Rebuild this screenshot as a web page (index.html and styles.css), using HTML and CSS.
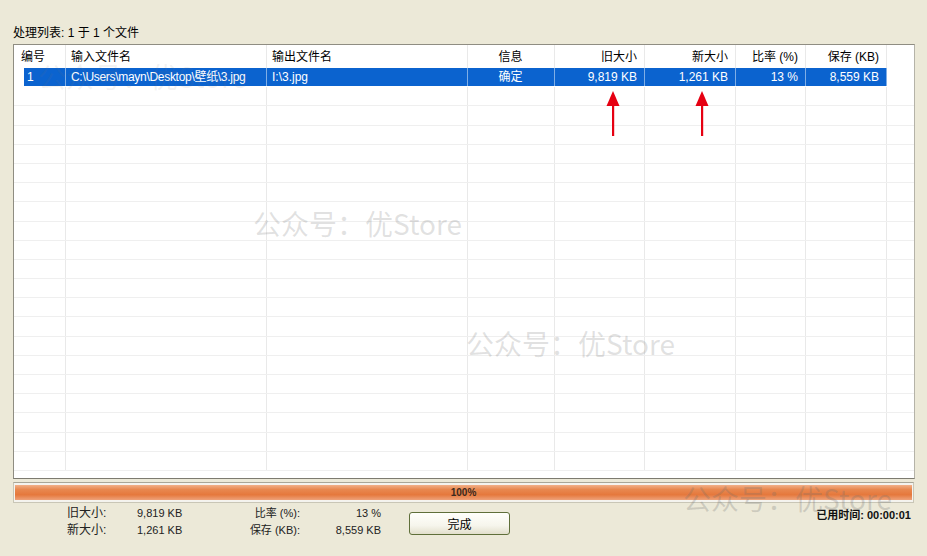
FILE: index.html
```html
<!DOCTYPE html>
<html lang="zh">
<head>
<meta charset="utf-8">
<link rel="stylesheet" href="styles.css">
</head>
<body>
<div class="app">
  <div class="title">处理列表: 1 于 1 个文件</div>
  <div class="list">
    <div class="row head">
      <div class="c c1">编号</div>
      <div class="c c2">输入文件名</div>
      <div class="c c3">输出文件名</div>
      <div class="c c4 center">信息</div>
      <div class="c c5 right">旧大小</div>
      <div class="c c6 right">新大小</div>
      <div class="c c7 right">比率 (%)</div>
      <div class="c c8 right">保存 (KB)</div>
      <div class="c c9"></div>
    </div>
    <div class="row sel">
      <div class="c c1"><span class="pad"></span><span class="selcell">1</span></div>
      <div class="c c2">C:\Users\mayn\Desktop\壁纸\3.jpg</div>
      <div class="c c3">I:\3.jpg</div>
      <div class="c c4 center">确定</div>
      <div class="c c5 right">9,819 KB</div>
      <div class="c c6 right">1,261 KB</div>
      <div class="c c7 right">13 %</div>
      <div class="c c8 right">8,559 KB</div>
      <div class="c c9 nosel"></div>
    </div>
    <div class="row"><div class="c c1"></div><div class="c c2"></div><div class="c c3"></div><div class="c c4"></div><div class="c c5"></div><div class="c c6"></div><div class="c c7"></div><div class="c c8"></div><div class="c c9"></div></div>
    <div class="row"><div class="c c1"></div><div class="c c2"></div><div class="c c3"></div><div class="c c4"></div><div class="c c5"></div><div class="c c6"></div><div class="c c7"></div><div class="c c8"></div><div class="c c9"></div></div>
    <div class="row"><div class="c c1"></div><div class="c c2"></div><div class="c c3"></div><div class="c c4"></div><div class="c c5"></div><div class="c c6"></div><div class="c c7"></div><div class="c c8"></div><div class="c c9"></div></div>
    <div class="row"><div class="c c1"></div><div class="c c2"></div><div class="c c3"></div><div class="c c4"></div><div class="c c5"></div><div class="c c6"></div><div class="c c7"></div><div class="c c8"></div><div class="c c9"></div></div>
    <div class="row"><div class="c c1"></div><div class="c c2"></div><div class="c c3"></div><div class="c c4"></div><div class="c c5"></div><div class="c c6"></div><div class="c c7"></div><div class="c c8"></div><div class="c c9"></div></div>
    <div class="row"><div class="c c1"></div><div class="c c2"></div><div class="c c3"></div><div class="c c4"></div><div class="c c5"></div><div class="c c6"></div><div class="c c7"></div><div class="c c8"></div><div class="c c9"></div></div>
    <div class="row"><div class="c c1"></div><div class="c c2"></div><div class="c c3"></div><div class="c c4"></div><div class="c c5"></div><div class="c c6"></div><div class="c c7"></div><div class="c c8"></div><div class="c c9"></div></div>
    <div class="row"><div class="c c1"></div><div class="c c2"></div><div class="c c3"></div><div class="c c4"></div><div class="c c5"></div><div class="c c6"></div><div class="c c7"></div><div class="c c8"></div><div class="c c9"></div></div>
    <div class="row"><div class="c c1"></div><div class="c c2"></div><div class="c c3"></div><div class="c c4"></div><div class="c c5"></div><div class="c c6"></div><div class="c c7"></div><div class="c c8"></div><div class="c c9"></div></div>
    <div class="row"><div class="c c1"></div><div class="c c2"></div><div class="c c3"></div><div class="c c4"></div><div class="c c5"></div><div class="c c6"></div><div class="c c7"></div><div class="c c8"></div><div class="c c9"></div></div>
    <div class="row"><div class="c c1"></div><div class="c c2"></div><div class="c c3"></div><div class="c c4"></div><div class="c c5"></div><div class="c c6"></div><div class="c c7"></div><div class="c c8"></div><div class="c c9"></div></div>
    <div class="row"><div class="c c1"></div><div class="c c2"></div><div class="c c3"></div><div class="c c4"></div><div class="c c5"></div><div class="c c6"></div><div class="c c7"></div><div class="c c8"></div><div class="c c9"></div></div>
    <div class="row"><div class="c c1"></div><div class="c c2"></div><div class="c c3"></div><div class="c c4"></div><div class="c c5"></div><div class="c c6"></div><div class="c c7"></div><div class="c c8"></div><div class="c c9"></div></div>
    <div class="row"><div class="c c1"></div><div class="c c2"></div><div class="c c3"></div><div class="c c4"></div><div class="c c5"></div><div class="c c6"></div><div class="c c7"></div><div class="c c8"></div><div class="c c9"></div></div>
    <div class="row"><div class="c c1"></div><div class="c c2"></div><div class="c c3"></div><div class="c c4"></div><div class="c c5"></div><div class="c c6"></div><div class="c c7"></div><div class="c c8"></div><div class="c c9"></div></div>
    <div class="row"><div class="c c1"></div><div class="c c2"></div><div class="c c3"></div><div class="c c4"></div><div class="c c5"></div><div class="c c6"></div><div class="c c7"></div><div class="c c8"></div><div class="c c9"></div></div>
    <div class="row"><div class="c c1"></div><div class="c c2"></div><div class="c c3"></div><div class="c c4"></div><div class="c c5"></div><div class="c c6"></div><div class="c c7"></div><div class="c c8"></div><div class="c c9"></div></div>
    <div class="row"><div class="c c1"></div><div class="c c2"></div><div class="c c3"></div><div class="c c4"></div><div class="c c5"></div><div class="c c6"></div><div class="c c7"></div><div class="c c8"></div><div class="c c9"></div></div>
    <div class="row"><div class="c c1"></div><div class="c c2"></div><div class="c c3"></div><div class="c c4"></div><div class="c c5"></div><div class="c c6"></div><div class="c c7"></div><div class="c c8"></div><div class="c c9"></div></div>
    <div class="row"><div class="c c1"></div><div class="c c2"></div><div class="c c3"></div><div class="c c4"></div><div class="c c5"></div><div class="c c6"></div><div class="c c7"></div><div class="c c8"></div><div class="c c9"></div></div>
  </div>
  <div class="progress"><div class="fill">100%</div></div>
  <div class="footer">
    <div class="stats">
      <div class="lbl">旧大小:</div><div class="val">9,819 KB</div><div class="lbl2">比率 (%):</div><div class="val2">13 %</div>
      <div class="lbl">新大小:</div><div class="val">1,261 KB</div><div class="lbl2">保存 (KB):</div><div class="val2">8,559 KB</div>
    </div>
    <button class="btn">完成</button>
    <div class="time">已用时间: 00:00:01</div>
  </div>

  <svg class="arrow a1" width="16" height="46" viewBox="0 0 16 46"><polygon points="8,0 14.5,15 1.5,15" fill="#e60012"/><rect x="7" y="14" width="2.2" height="31" fill="#e60012"/></svg>
  <svg class="arrow a2" width="16" height="46" viewBox="0 0 16 46"><polygon points="8,0 14.5,15 1.5,15" fill="#e60012"/><rect x="7" y="14" width="2.2" height="31" fill="#e60012"/></svg>

  <div class="wm w0">公众号：优Store</div>
  <div class="wm w1">公众号：优Store</div>
  <div class="wm w2">公众号：优Store</div>
  <div class="wm w3">公众号：优Store</div>
</div>
</body>
</html>
```
FILE: styles.css
```css
html, body {
  margin: 0;
  padding: 0;
}
body {
  background: #ece9d8;
  font-family: "Liberation Sans", "Noto Sans CJK SC", sans-serif;
  font-size: 12px;
  color: #000;
  width: 927px;
  height: 556px;
  overflow: hidden;
}
.app {
  position: relative;
  width: 927px;
  height: 556px;
}
.title {
  padding: 26px 0 0 13px;
  line-height: 14px;
  height: 14px;
}
.list {
  margin: 4px 0 0 13px;
  width: 902px;
  height: 435px;
  box-sizing: border-box;
  border: 1px solid #8f8d82;
  border-right-color: #b5b3a8;
  border-bottom-color: #7d7b70;
  background: #fff;
  overflow: hidden;
}
.row {
  display: flex;
  height: 19.2px;
  box-sizing: border-box;
  border-bottom: 1px solid #efefef;
}
.row.head {
  height: 23px;
  border-bottom: none;
  line-height: 25px;
}
.c {
  box-sizing: border-box;
  border-right: 1px solid #e9e9e9;
  padding: 0 7px 0 6px;
  white-space: nowrap;
  overflow: hidden;
  flex: none;
}
.c1 { width: 52px; }
.c2 { width: 201px; padding-left: 5px; }
.c3 { width: 201px; padding-left: 5px; }
.c4 { width: 87px; }
.c5 { width: 90px; }
.c6 { width: 91px; }
.c7 { width: 70px; }
.c8 { width: 81px; }
.c9 { width: 27px; border-right: none; }
.center { text-align: center; }
.right { text-align: right; }
.row.head .c1 { padding-left: 7px; }

.row.sel {
  line-height: 19px;
  color: #fff;
  border-bottom-color: #fff;
}
.row.sel .c2 { letter-spacing: -0.3px; }
.row.sel .c {
  background: #0b63cf;
  border-right-color: #7faee6;
}
.row.sel .c1 {
  background: #fff;
  padding: 0;
  display: flex;
  border-right-color: #7faee6;
}
.row.sel .c1 .pad {
  width: 10px;
  flex: none;
}
.row.sel .c1 .selcell {
  flex: 1;
  background: #0b63cf;
  padding-left: 3px;
}
.row.sel .c9.nosel {
  background: #fff;
}

.progress {
  margin: 3px 0 0 13px;
  width: 901px;
  height: 21px;
  box-sizing: border-box;
  border: 1px solid #c9c6b6;
  border-top-color: #a9a798;
  background: #f4f3ee;
  padding: 2px 1px;
}
.fill {
  height: 100%;
  background: linear-gradient(#f2b088 0%, #e8884f 30%, #e5783c 65%, #eea27a 100%);
  color: #3a2a20;
  font-size: 10px;
  font-weight: bold;
  text-align: center;
  line-height: 15px;
}
.footer {
  display: flex;
  align-items: flex-start;
  padding: 2px 16px 0 67px;
}
.stats {
  display: grid;
  grid-template-columns: 70px 80px 83px 81px;
  line-height: 17px;
  font-size: 11px;
  color: #222;
}
.stats .lbl { font-size: 12px; }
.lbl2 { text-align: right; }
.val2 { text-align: right; }
.btn {
  margin: 7px 0 0 28px;
  width: 101px;
  height: 23px;
  box-sizing: border-box;
  border: 1px solid #5f6f3a;
  border-radius: 3px;
  background: linear-gradient(#fffffb 0%, #f6f5ec 60%, #e2dfcc 100%);
  font-family: "Liberation Sans", "Noto Sans CJK SC", sans-serif;
  font-size: 12px;
  color: #000;
  padding: 0;
}
.time {
  margin: 3px 0 0 auto;
  font-weight: bold;
  font-size: 11px;
  line-height: 14px;
  color: #111;
}
.arrow {
  position: absolute;
  top: 91px;
}
.a1 { left: 605px; }
.a2 { left: 694px; }
.wm {
  position: absolute;
  font-family: "Noto Sans CJK SC", "Liberation Sans", sans-serif;
  font-size: 28px;
  line-height: 32px;
  color: rgba(120, 120, 120, 0.22);
  white-space: nowrap;
  pointer-events: none;
}
.w0 { left: 38px; top: 60px; color: rgba(120,120,120,0.1); }
.w1 { left: 253px; top: 207px; }
.w2 { left: 466px; top: 327px; }
.w3 { left: 683px; top: 482px; color: rgba(110,110,110,0.25); }
```
